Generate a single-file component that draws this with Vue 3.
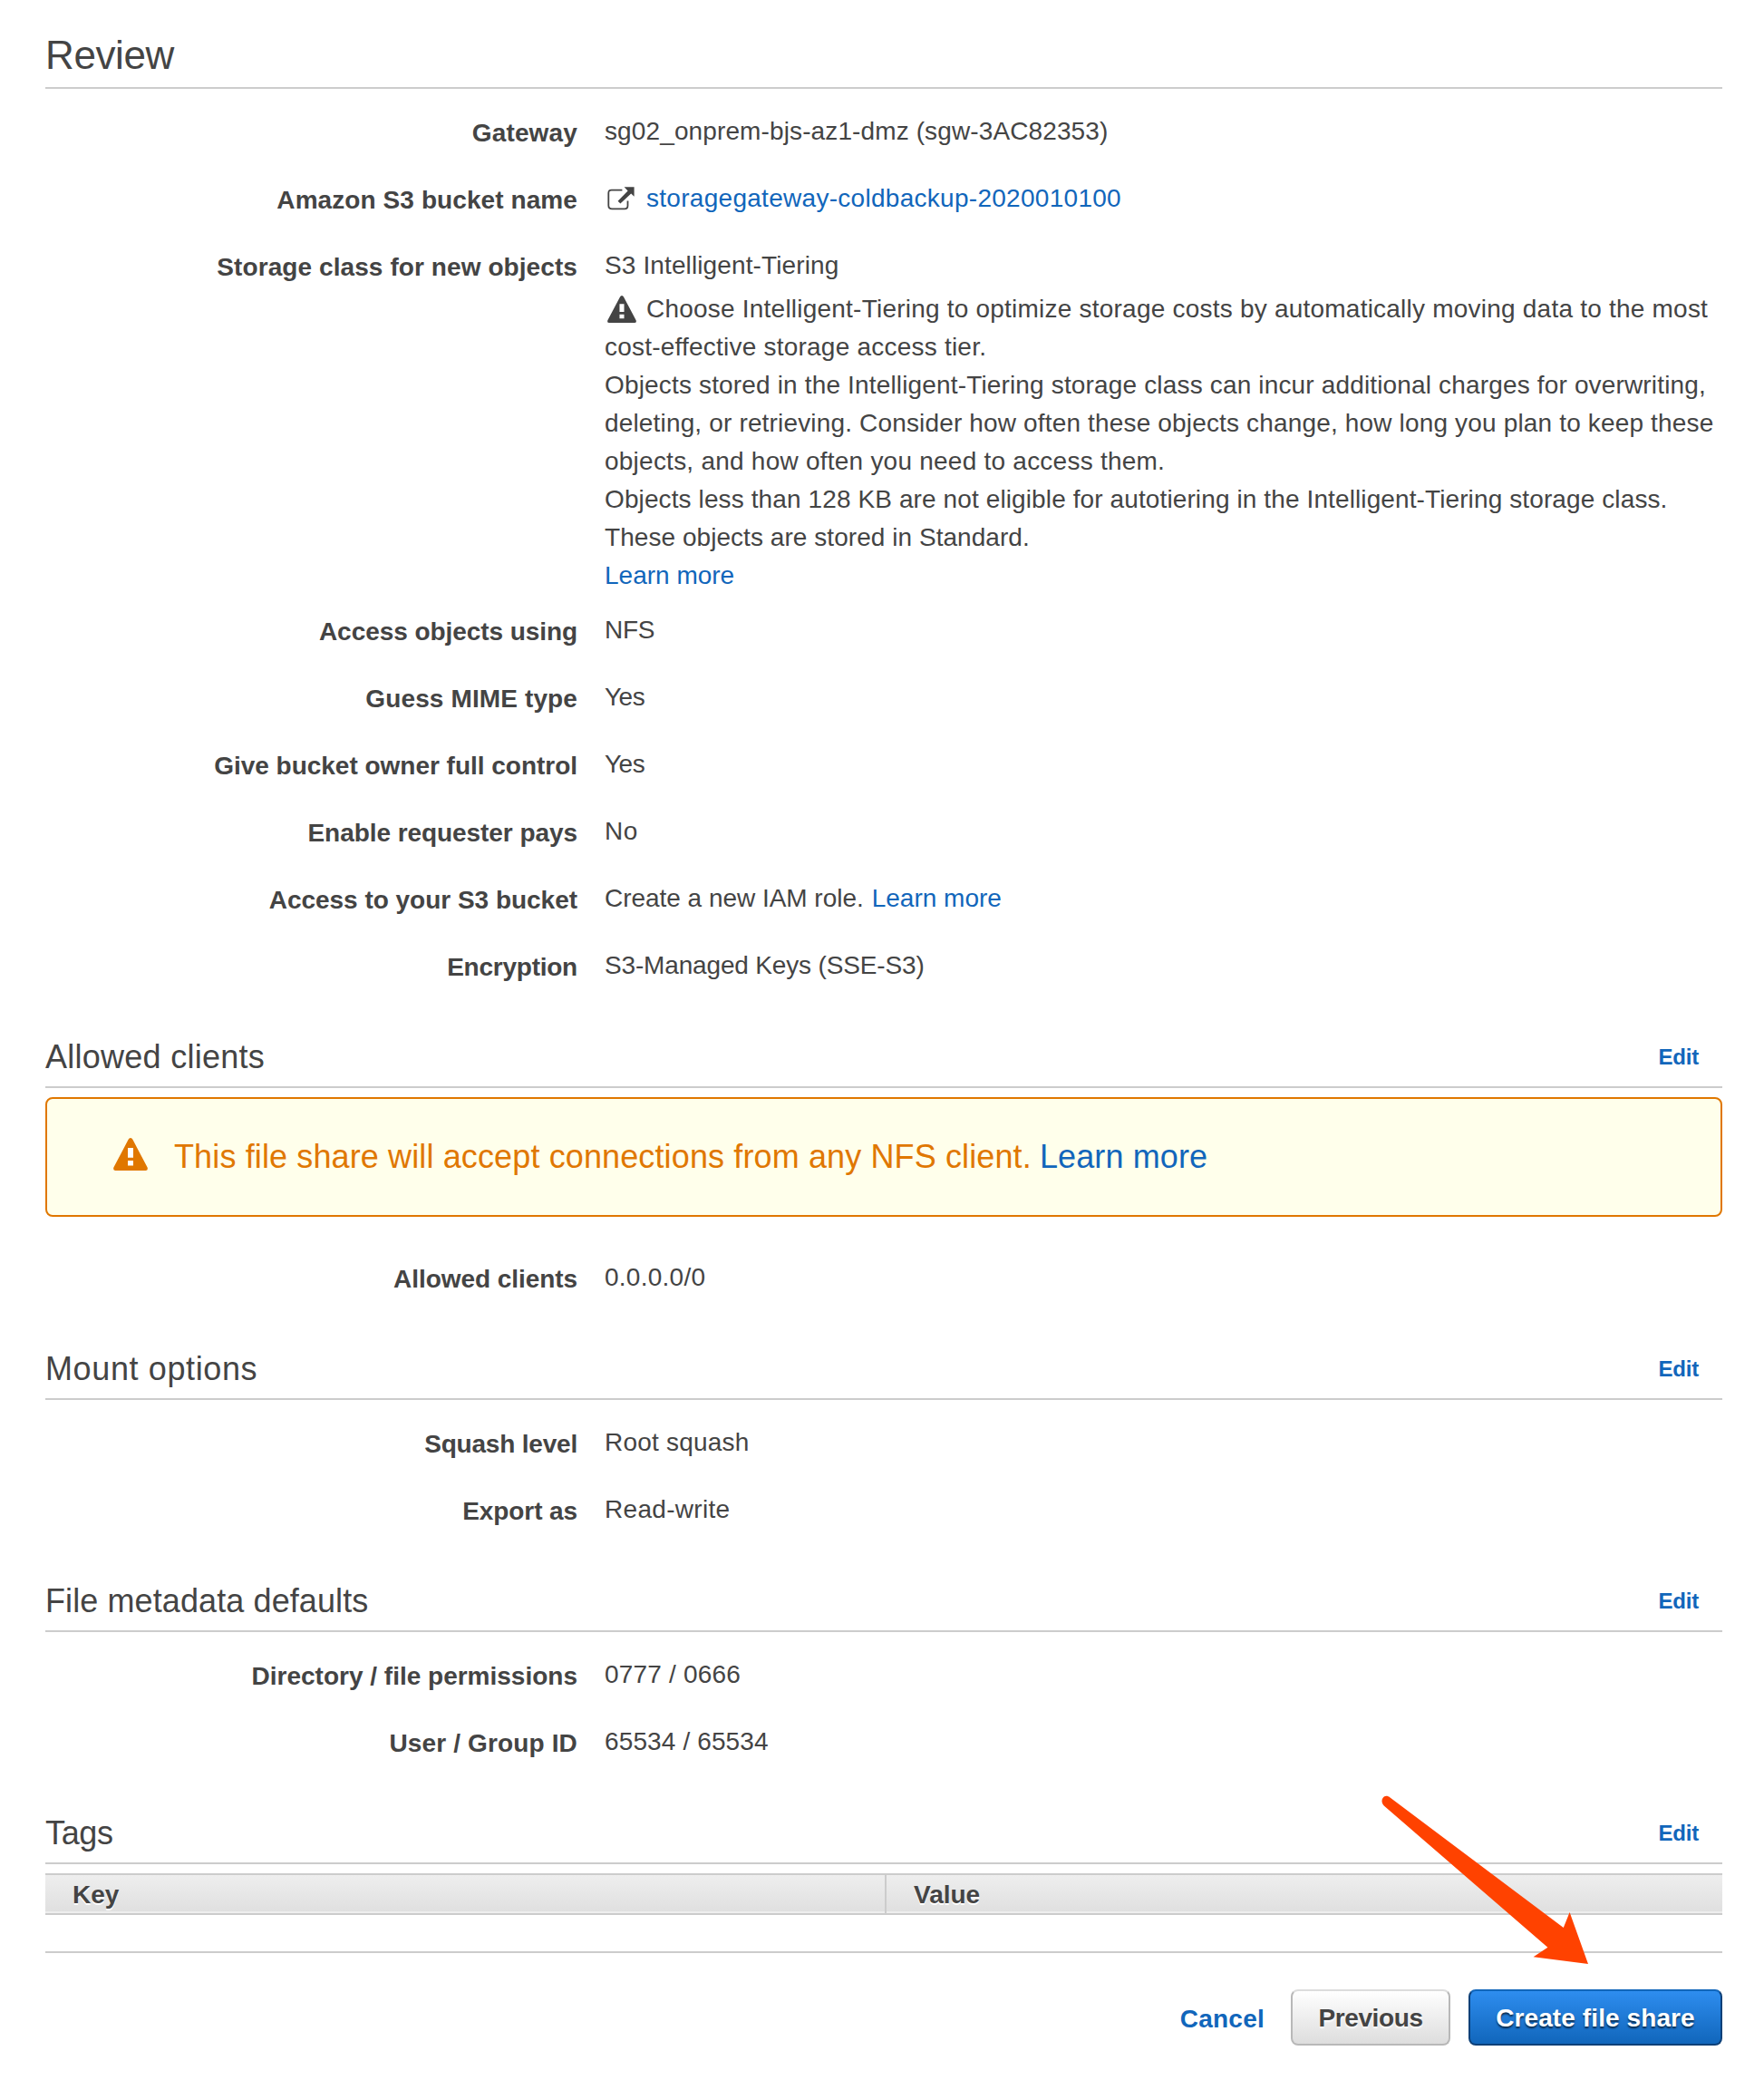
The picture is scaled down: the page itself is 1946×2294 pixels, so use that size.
<script setup>
const general = [
  { label: 'Access objects using', ls: -0.065, value: 'NFS', vs: -0.3 },
  { label: 'Guess MIME type', ls: 0.12, value: 'Yes', vs: -0.5 },
  { label: 'Give bucket owner full control', ls: -0.02, value: 'Yes', vs: -0.5 },
  { label: 'Enable requester pays', ls: -0.061, value: 'No', vs: 0.6 },
  { label: 'Access to your S3 bucket', ls: -0.021, value: 'Create a new IAM role.', vs: -0.03, link: 'Learn more' },
  { label: 'Encryption', ls: -0.237, value: 'S3-Managed Keys (SSE-S3)', vs: -0.16 },
]

const note = [
  { text: 'Choose Intelligent-Tiering to optimize storage costs by automatically moving data to the most', ls: 0.22, icon: true },
  { text: 'cost-effective storage access tier.', ls: 0.22 },
  { text: 'Objects stored in the Intelligent-Tiering storage class can incur additional charges for overwriting,', ls: 0.159 },
  { text: 'deleting, or retrieving. Consider how often these objects change, how long you plan to keep these', ls: 0.16 },
  { text: 'objects, and how often you need to access them.', ls: 0.235 },
  { text: 'Objects less than 128 KB are not eligible for autotiering in the Intelligent-Tiering storage class.', ls: 0.11 },
  { text: 'These objects are stored in Standard.', ls: 0.051 },
]

const sections = [
  {
    title: 'Allowed clients', ts: 0.26, alert: true,
    rows: [{ label: 'Allowed clients', ls: -0.06, value: '0.0.0.0/0', vs: 0.25 }],
  },
  {
    title: 'Mount options', ts: 0.62,
    rows: [
      { label: 'Squash level', ls: -0.2, value: 'Root squash', vs: 0.22 },
      { label: 'Export as', ls: -0.1, value: 'Read-write', vs: 0.3 },
    ],
  },
  {
    title: 'File metadata defaults', ts: 0.1,
    rows: [
      { label: 'Directory / file permissions', ls: 0, value: '0777 / 0666', vs: 0.2 },
      { label: 'User / Group ID', ls: 0.15, value: '65534 / 65534', vs: 0.126 },
    ],
  },
]

const track = (n) => ({ letterSpacing: n + 'px' })
</script>

<template>
  <main class="page">
    <header class="head head-main">
      <h1 :style="track(-0.4)">Review</h1>
    </header>

    <dl class="rows">
      <div class="row">
        <dt :style="track(0.15)">Gateway</dt>
        <dd :style="track(0.119)">sg02_onprem-bjs-az1-dmz (sgw-3AC82353)</dd>
      </div>
      <div class="row">
        <dt :style="track(0.085)">Amazon S3 bucket name</dt>
        <dd class="with-icon">
          <svg class="icon-ext" viewBox="0 0 30 26" width="30" height="26">
            <path d="M16.4 3.600H4.600Q1.300 3.600 1.300 7v13.600q0 3.800 3.800 3.800h14q3.400 0 3.400-3.600V15.500" fill="none" stroke="#444" stroke-width="1.800" />
            <path d="M18.600.3H29.600V10.800L26.200 7.600 14.400 18.600 11.600 15.800 22.600 4.600Z" fill="#444" />
          </svg>
          <a :style="track(0.285)">storagegateway-coldbackup-2020010100</a>
        </dd>
      </div>
      <div class="row row-note">
        <dt :style="track(0.083)">Storage class for new objects</dt>
        <dd>
          <div :style="track(0.12)">S3 Intelligent-Tiering</div>
          <div class="note">
            <div v-for="line in note" :key="line.text" :class="{ 'with-icon': line.icon }">
              <svg v-if="line.icon" class="icon-warn" viewBox="0 0 38 36" width="32" height="30" preserveAspectRatio="none">
                <path fill-rule="evenodd" fill="#444" d="M19 0q1.600 0 2.400 1.800L37.600 32.600Q38.600 36 35.600 36H2.400Q-.6 36 .4 32.600L16.600 1.800Q17.400 0 19 0ZM16 11v10.700h6V11ZM16 25v5.400h6V25Z" />
              </svg>
              <span :style="track(line.ls)">{{ line.text }}</span>
            </div>
            <div><a>Learn more</a></div>
          </div>
        </dd>
      </div>
      <div v-for="row in general" :key="row.label" class="row">
        <dt :style="track(row.ls)">{{ row.label }}</dt>
        <dd>
          <span :style="track(row.vs)">{{ row.value }}</span><a v-if="row.link" class="after">{{ row.link }}</a>
        </dd>
      </div>
    </dl>

    <section v-for="s in sections" :key="s.title">
      <header class="head">
        <h2 :style="track(s.ts)">{{ s.title }}</h2>
        <a class="edit">Edit</a>
      </header>
      <div v-if="s.alert" class="alert">
        <svg class="alert-icon" viewBox="0 0 38 36" width="38" height="36">
          <path fill="#e07700" d="M19 0q1.600 0 2.400 1.800L37.600 32.600Q38.600 36 35.600 36H2.400Q-.6 36 .4 32.600L16.600 1.800Q17.400 0 19 0Z" />
          <path fill="#fff" d="M16 11h6v10.700h-6ZM16 25h6v5.400h-6Z" />
        </svg>
        <p><span>This file share will accept connections from any NFS client.</span><a>Learn more</a></p>
      </div>
      <dl class="rows" :class="{ 'rows-alert': s.alert }">
        <div v-for="row in s.rows" :key="row.label" class="row">
          <dt :style="track(row.ls)">{{ row.label }}</dt>
          <dd :style="track(row.vs)">{{ row.value }}</dd>
        </div>
      </dl>
    </section>

    <section>
      <header class="head">
        <h2 :style="track(-0.348)">Tags</h2>
        <a class="edit">Edit</a>
      </header>
      <div class="tags">
        <div class="cell">Key</div>
        <div class="cell">Value</div>
      </div>
    </section>

    <footer class="foot">
      <a class="cancel">Cancel</a>
      <button class="btn previous">Previous</button>
      <button class="btn create">Create file share</button>
    </footer>

    <svg class="arrow" viewBox="0 0 232 182" width="232" height="182">
      <path fill="#ff4200" d="M13.200 4.300 204.800 148 211.600 131 232 188 171.600 180.300 187.400 169.700 7.600 14.300C4.600 11.500 3.500 8 5.500 5 7.300 2.300 10.500 2 13.200 4.300Z" />
    </svg>
  </main>
</template>

<style>
body {
  background: #fff;
}
</style>

<style scoped>
.page {
  position: relative;
  box-sizing: border-box;
  width: 1946px;
  height: 2294px;
  padding: 0 46px 0 50px;
  overflow: hidden;
  background: #fff;
  color: #444;
  font: 28px/42px "Liberation Sans", Arial, sans-serif;
}
a {
  color: #1166bb;
}
h1,
h2,
dl,
dd,
p {
  margin: 0;
  font-weight: 400;
}
.head {
  box-sizing: border-box;
  display: flex;
  justify-content: space-between;
  align-items: flex-end;
  height: 98px;
  padding-bottom: 11px;
  border-bottom: 2px solid #ccc;
}
.head-main {
  padding-bottom: 10px;
}
h1 {
  font-size: 44px;
  line-height: 50px;
}
h2 {
  font-size: 36px;
  line-height: 42px;
}
.edit {
  padding: 0 26px 1px 0;
  font-size: 24px;
  font-weight: 700;
  line-height: 40px;
  letter-spacing: -0.2px;
}
.rows {
  padding-top: 10px;
}
.rows-alert {
  padding-top: 30px;
}
.row {
  display: flex;
  padding: 16px 0;
  white-space: nowrap;
}
.row-note {
  padding-bottom: 2px;
}
dt {
  width: 587px;
  height: 40px;
  margin-right: 30px;
  padding-top: 2px;
  text-align: right;
  font-weight: 700;
}
dd {
  height: 42px;
}
.row-note dd {
  height: auto;
}
.note {
  padding-top: 6px;
}
.with-icon {
  display: flex;
}
.icon-ext {
  margin: 8px 13px 0 3px;
}
.icon-warn {
  margin: 6px 11px 0 3px;
}
.after {
  margin-left: 9px;
}
.alert {
  box-sizing: border-box;
  display: flex;
  height: 132px;
  margin-top: 10px;
  padding: 43px 0 0 73px;
  border: 2px solid #e07700;
  border-radius: 8px;
  background: #ffffeb;
}
.alert p {
  margin: 0 0 0 29px;
  color: #e07700;
  font-size: 36px;
  letter-spacing: 0.125px;
}
.alert a {
  margin-left: 9px;
}
.tags {
  box-sizing: border-box;
  display: flex;
  height: 46px;
  margin-top: 10px;
  border: solid #ccc;
  border-width: 2px 0;
  background: linear-gradient(#eee, #dfdfdf);
  box-shadow: inset 0 -2px #eee;
}
.cell {
  box-sizing: border-box;
  width: 926px;
  padding-left: 30px;
  font-weight: 700;
  line-height: 44px;
  text-shadow: 0 2px #fff;
}
.cell + .cell {
  width: 924px;
  border-left: 2px solid #ccc;
}
.foot {
  display: flex;
  justify-content: flex-end;
  margin-top: 40px;
  padding-top: 40px;
  border-top: 2px solid #ccc;
  font-weight: 700;
}
.cancel {
  margin-right: 29px;
  line-height: 65px;
  height: 62px;
  letter-spacing: 0.25px;
}
.btn {
  box-sizing: border-box;
  height: 62px;
  padding: 1px 0 0;
  border-radius: 8px;
  font: inherit;
  line-height: 57px;
  white-space: nowrap;
}
.previous {
  width: 176px;
  margin-right: 20px;
  border: 2px solid #b8b8b8;
  border-top-color: #ddd;
  background: linear-gradient(#fff, #ddd);
  color: #444;
  letter-spacing: -0.386px;
  text-shadow: 0 2px 2px #fff;
}
.create {
  width: 280px;
  border: 2px solid #0d4078;
  border-top-color: #1166bb;
  background: linear-gradient(#2e8def, #1166bb);
  color: #fff;
  letter-spacing: 0.1px;
  text-shadow: 0 2px 2px rgba(0, 0, 0, 0.65);
}
.arrow {
  position: absolute;
  left: 1520px;
  top: 1978px;
  overflow: visible;
}
</style>
